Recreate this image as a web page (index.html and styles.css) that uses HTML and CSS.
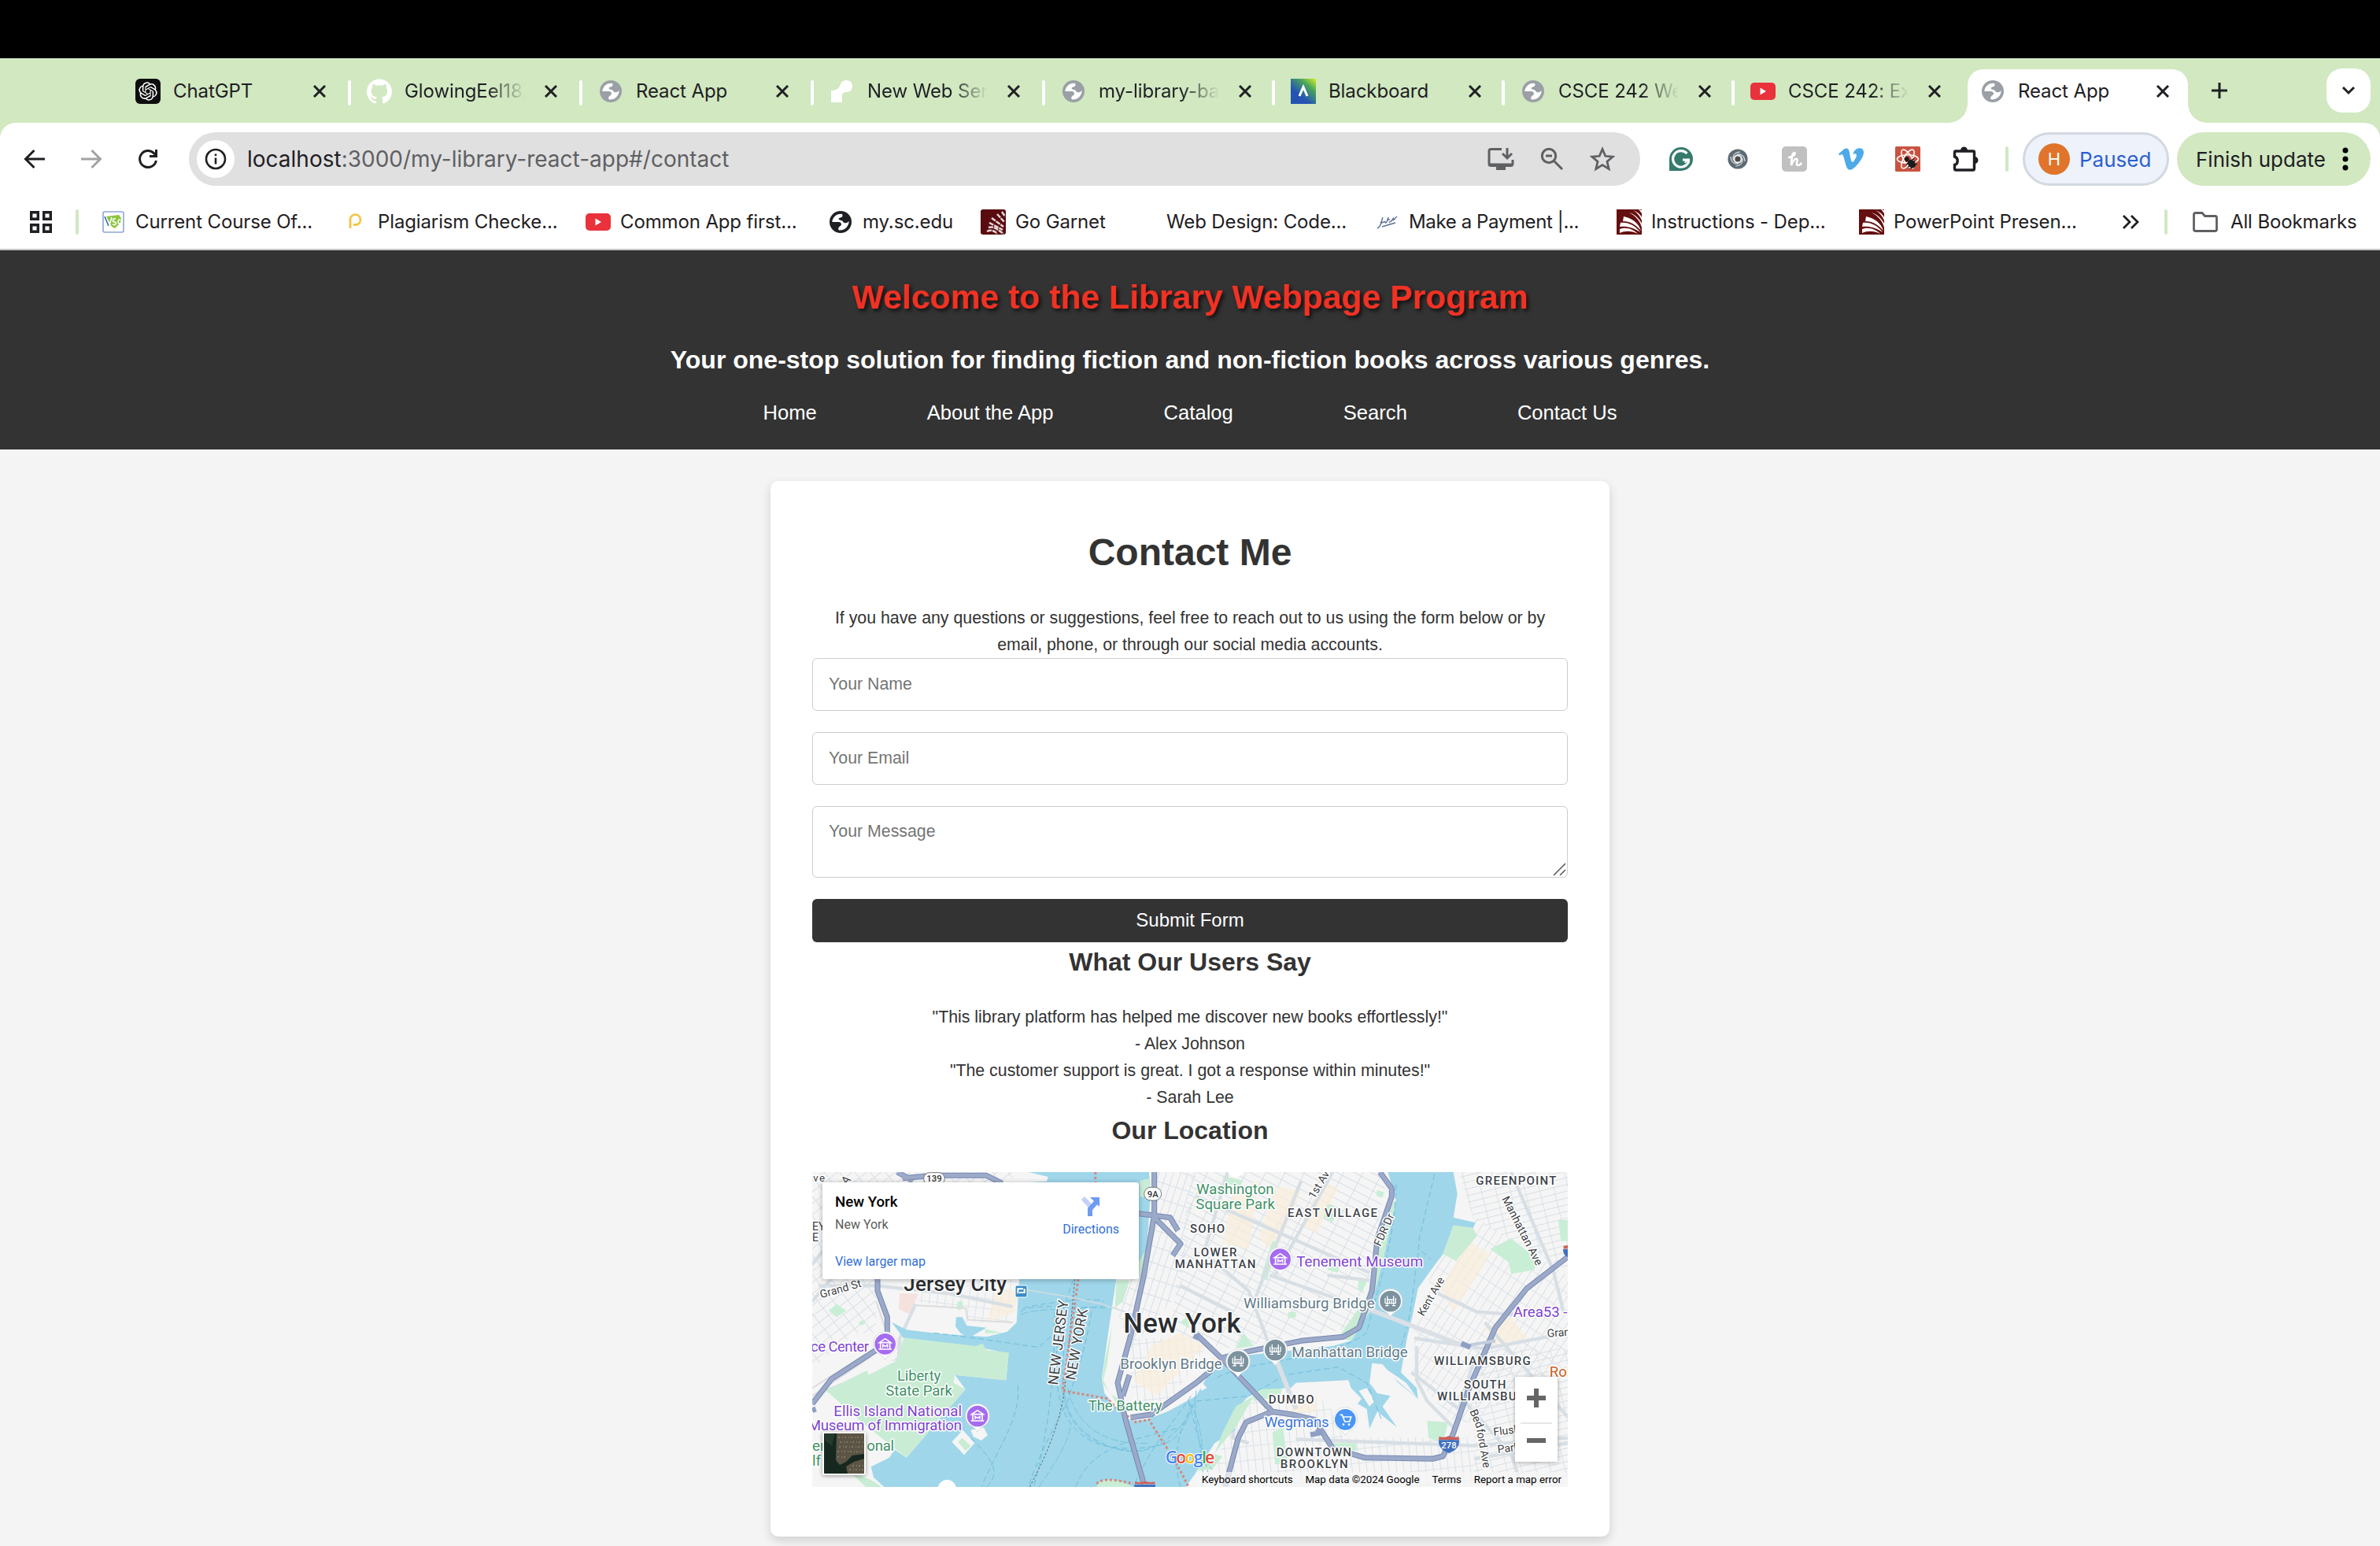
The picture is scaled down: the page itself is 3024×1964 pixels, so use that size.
FILE: index.html
```html
<!DOCTYPE html>
<html lang="en">
<head>
<meta charset="utf-8">
<title>React App</title>
<link rel="stylesheet" href="styles.css">
</head>
<body>
<svg class="defs" width="0" height="0" aria-hidden="true">
  <symbol id="globe" viewBox="0 0 28 28"><circle cx="14" cy="14" r="14" fill="currentColor"/><path class="globe-land" d="M16 4C9 3 4 8 3.3 14H11C14 14 16 16 14.5 18.5L13 19.5C11 21 10.5 23 12 24.5C19 25 24.5 20 24.7 13C22 16 18 16 17 13.5C16 11.5 13 12 12 11C11 9 13 8.5 15 8C16.500 7.500 17 5.500 16 4Z"/></symbol>
  <symbol id="close" viewBox="0 0 16 16"><path d="M1 1L15 15M15 1L1 15" stroke="#1f2023" stroke-width="3" fill="none"/></symbol>
  <symbol id="yt" viewBox="0 0 32 22"><rect width="32" height="22" rx="5" fill="#ea323c"/><path d="M12.500 6.500L20 11L12.500 15.500Z" fill="#fff"/></symbol>
  <symbol id="usc" viewBox="0 0 32 32"><rect width="32" height="32" fill="#650f10"/><g fill="#fff"><path d="M16 4C24 8 30 15 32 23V18C29 12 23 6 16 4ZM21 1C26 4 30 9 32 14V10C30 6 26 3 21 1Z"/><path d="M9 9C19 11 28 17 31 27C24 19 17 15 8 15Z"/><path d="M5 17C15 16 24 21 30 29C21 23 13 21 4 22Z"/><path d="M4 25C12 22 21 25 27 31C19 27 11 27 4 30ZM28 0L32 5V1Z"/></g></symbol>
</svg>

<div class="notch-bar"></div>

<nav class="tabs">
  <div class="tab"><span class="fav"><svg width="32" height="32" viewBox="0 0 32 32"><rect width="32" height="32" rx="6" fill="#0d0d0d"/><path transform="translate(4.300 4.300) scale(.975)" fill="#fff" d="M22.2819 9.8211a5.9847 5.9847 0 0 0-.5157-4.9108 6.0462 6.0462 0 0 0-6.5098-2.9A6.0651 6.0651 0 0 0 4.9807 4.1818a5.9847 5.9847 0 0 0-3.9977 2.9 6.0462 6.0462 0 0 0 .7427 7.0966 5.98 5.98 0 0 0 .511 4.9107 6.051 6.051 0 0 0 6.5146 2.9001A5.9847 5.9847 0 0 0 13.2599 24a6.0557 6.0557 0 0 0 5.7718-4.2058 5.9894 5.9894 0 0 0 3.9977-2.9001 6.0557 6.0557 0 0 0-.7475-7.0729zm-9.022 12.6081a4.4755 4.4755 0 0 1-2.8764-1.0408l.1419-.0804 4.7783-2.7582a.7948.7948 0 0 0 .3927-.6813v-6.7369l2.02 1.1686a.071.071 0 0 1 .038.052v5.5826a4.504 4.504 0 0 1-4.4945 4.4944zm-9.6607-4.1254a4.4708 4.4708 0 0 1-.5346-3.0137l.142.0852 4.783 2.7582a.7712.7712 0 0 0 .7806 0l5.8428-3.3685v2.3324a.0804.0804 0 0 1-.0332.0615L9.74 19.9502a4.4992 4.4992 0 0 1-6.1408-1.6464zM2.3408 7.8956a4.485 4.485 0 0 1 2.3655-1.9728V11.6a.7664.7664 0 0 0 .3879.6765l5.8144 3.3543-2.0201 1.1685a.0757.0757 0 0 1-.071 0l-4.8303-2.7865A4.504 4.504 0 0 1 2.3408 7.872zm16.5963 3.8558L13.1038 8.364 15.1192 7.2a.0757.0757 0 0 1 .071 0l4.8303 2.7913a4.4944 4.4944 0 0 1-.6765 8.1042v-5.6772a.79.79 0 0 0-.407-.667zm2.0107-3.0231l-.142-.0852-4.7735-2.7818a.7759.7759 0 0 0-.7854 0L9.409 9.2297V6.8974a.0662.0662 0 0 1 .0284-.0615l4.8303-2.7866a4.4992 4.4992 0 0 1 6.6802 4.66zM8.3065 12.863l-2.02-1.1638a.0804.0804 0 0 1-.038-.0567V6.0742a4.4992 4.4992 0 0 1 7.3757-3.4537l-.142.0805L8.704 5.459a.7948.7948 0 0 0-.3927.6813zm1.0976-2.3654l2.602-1.4998 2.6069 1.4998v2.9994l-2.5974 1.4997-2.6067-1.4997Z"/></svg></span><span class="name">ChatGPT</span><svg class="x"><use href="#close"/></svg></div>
  <div class="tab"><span class="fav"><svg width="32" height="32" viewBox="0 0 24 24"><path fill="#fff" d="M12 .297c-6.63 0-12 5.373-12 12 0 5.303 3.438 9.800 8.205 11.385.6.113.82-.258.82-.577 0-.285-.01-1.040-.015-2.040-3.338.724-4.042-1.610-4.042-1.610C4.422 18.070 3.633 17.700 3.633 17.700c-1.087-.744.084-.729.084-.729 1.205.084 1.838 1.236 1.838 1.236 1.070 1.835 2.809 1.305 3.495.998.108-.776.417-1.305.76-1.605-2.665-.3-5.466-1.332-5.466-5.930 0-1.310.465-2.380 1.235-3.220-.135-.303-.54-1.523.105-3.176 0 0 1.005-.322 3.300 1.230.96-.267 1.980-.399 3-.405 1.020.006 2.040.138 3 .405 2.280-1.552 3.285-1.230 3.285-1.230.645 1.653.24 2.873.12 3.176.765.84 1.230 1.910 1.230 3.220 0 4.610-2.805 5.625-5.475 5.920.42.36.81 1.096.81 2.220 0 1.606-.015 2.896-.015 3.286 0 .315.21.69.825.57C20.565 22.092 24 17.592 24 12.297c0-6.627-5.373-12-12-12"/></svg></span><span class="name fade">GlowingEel18/</span><svg class="x"><use href="#close"/></svg></div>
  <div class="tab"><span class="fav gray"><svg width="28" height="28"><use href="#globe"/></svg></span><span class="name">React App</span><svg class="x"><use href="#close"/></svg></div>
  <div class="tab"><span class="fav"><svg width="32" height="32" viewBox="0 0 32 32"><path fill="#fff" d="M2 30V15C8 15 12 13 13.500 8C14.500 4 18 2 22 2C27 2 29 6 29 9.500C29 14 26 17 22 17C19 17 16 18 16 21V30Z"/></svg></span><span class="name fade">New Web Serv</span><svg class="x"><use href="#close"/></svg></div>
  <div class="tab short"><span class="fav gray"><svg width="28" height="28"><use href="#globe"/></svg></span><span class="name fade">my-library-bac</span><svg class="x"><use href="#close"/></svg></div>
  <div class="tab short"><span class="fav"><svg width="32" height="32" viewBox="0 0 32 32"><defs><linearGradient id="bb" x1="1" y1="0" x2=".4" y2=".7"><stop offset="0" stop-color="#d8ee2a"/><stop offset=".45" stop-color="#47a55a"/><stop offset="1" stop-color="#2553b4"/></linearGradient></defs><rect width="32" height="32" fill="url(#bb)"/><path d="M11 22L16 10.500L21 22" fill="none" stroke="#fff" stroke-width="3"/></svg></span><span class="name">Blackboard</span><svg class="x"><use href="#close"/></svg></div>
  <div class="tab short"><span class="fav gray"><svg width="28" height="28"><use href="#globe"/></svg></span><span class="name fade">CSCE 242 We</span><svg class="x"><use href="#close"/></svg></div>
  <div class="tab last"><span class="fav"><svg width="32" height="22"><use href="#yt"/></svg></span><span class="name fade">CSCE 242: Ex</span><svg class="x"><use href="#close"/></svg></div>
  <div class="tab active"><span class="fav gray"><svg width="28" height="28"><use href="#globe"/></svg></span><span class="name">React App</span><svg class="x"><use href="#close"/></svg></div>
  <svg class="plus" width="20" height="20"><path d="M10 0V20M0 10H20" stroke="#1f2023" stroke-width="3"/></svg>
  <button class="tab-menu"><svg width="18" height="12"><path d="M2 2L9 9L16 2" fill="none" stroke="#1f2023" stroke-width="3"/></svg></button>
</nav>

<div class="toolbar">
  <svg class="nav-ico back" width="28" height="26" viewBox="0 0 28 26"><path d="M27 13H3M13.500 2L2.500 13L13.500 24" fill="none" stroke="#1f2023" stroke-width="3"/></svg>
  <svg class="nav-ico fwd" width="28" height="26" viewBox="0 0 28 26"><path d="M1 13H25M14.500 2L25.500 13L14.500 24" fill="none" stroke="#a2a2a2" stroke-width="3"/></svg>
  <svg class="nav-ico reload" width="28" height="28" viewBox="0 0 28 28"><path d="M24.400 16A10.500 10.500 0 1 1 21.500 6.600L25 10" fill="none" stroke="#1f2023" stroke-width="3"/><path d="M26 2V12H16V9H23V2Z" fill="#1f2023"/></svg>
  <div class="omnibox">
    <span class="info"><svg width="28" height="28"><circle cx="14" cy="14" r="12" fill="none" stroke="#1f2023" stroke-width="2.600"/><path d="M14 12.500V20.500M14 7.500V10" stroke="#1f2023" stroke-width="2.600"/></svg></span>
    <span class="url">localhost<span>:3000/my-library-react-app#/contact</span></span>
    <svg class="ob-ico" width="34" height="30" viewBox="0 0 34 30"><path d="M18 2.500H4.500C3 2.500 2 3.500 2 5V21C2 22.500 3 23.500 4.500 23.500H29.500C31 23.500 32 22.500 32 21V16" fill="none" stroke="#5e6063" stroke-width="3"/><path d="M25 1V14M19 8L25 14L31 8" stroke="#5e6063" stroke-width="3" fill="none"/><path d="M2 20.500H32V24H2ZM11 23H23V29H11Z" fill="#5e6063"/></svg>
    <svg class="ob-ico" width="30" height="30" viewBox="0 0 30 30"><circle cx="11" cy="11" r="8.700" fill="none" stroke="#5e6063" stroke-width="3"/><path d="M7 11H15M17.500 17.500L28 28" stroke="#5e6063" stroke-width="3"/></svg>
    <svg class="ob-ico" width="32" height="32" viewBox="0 0 32 32"><path d="M16 3.500L19.800 12.300L29.200 13.100L22 19.300L24.200 28.500L16 23.600L7.800 28.500L10 19.300L2.800 13.100L12.200 12.300Z" fill="none" stroke="#5e6063" stroke-width="2.800"/></svg>
  </div>
  <div class="exts">
    <svg width="32" height="32" viewBox="0 0 32 32"><path d="M1 31V16A15 15 0 1 1 16 31Z" fill="#357a6b"/><path d="M23.500 9A10.300 10.300 0 1 0 25.500 19.500V17H18" fill="none" stroke="#fff" stroke-width="3.200"/><path d="M20.500 20.500L25.500 16.500" stroke="#fff" stroke-width="2"/></svg>
    <svg width="32" height="32" viewBox="0 0 32 32"><circle cx="16" cy="16" r="9.200" fill="none" stroke="#5d6a72" stroke-width="6.800"/><path d="M10 17C9 11 13 7 19 7M15 10C21 9 25 13 25 19M22 15C23 21 19 25 13 25M17 22C11 23 7 19 7 13" fill="none" stroke="#dfe4e8" stroke-width="1.100"/><circle cx="16" cy="16" r="5.200" fill="#e8ebed"/><circle cx="16" cy="16" r="3.600" fill="#4b4b4b"/></svg>
    <svg width="32" height="32" viewBox="0 0 32 32"><rect width="32" height="32" rx="5" fill="#c0c0c0"/><path d="M9 14C15 13 18 9 16 8C13 8 12 18 12 24C14 18 17 15 19 16C21 17 17 24 20 24C22 24 24 23 24.500 21.500" fill="none" stroke="#fff" stroke-width="2.600" stroke-linecap="round"/></svg>
    <svg width="32" height="32" viewBox="0 0 24 24"><path fill="#4caae8" d="M23.977 6.416c-.105 2.338-1.739 5.543-4.894 9.609-3.268 4.247-6.026 6.370-8.290 6.370-1.409 0-2.578-1.294-3.553-3.881L5.322 11.400C4.603 8.816 3.834 7.522 3.010 7.522c-.179 0-.806.378-1.881 1.132L0 7.197c1.185-1.044 2.351-2.084 3.501-3.128C5.080 2.701 6.266 1.984 7.055 1.910c1.867-.18 3.016 1.100 3.447 3.838.465 2.953.789 4.789.971 5.507.539 2.450 1.131 3.674 1.776 3.674.502 0 1.256-.796 2.265-2.385 1.004-1.589 1.540-2.797 1.612-3.628.144-1.371-.395-2.061-1.614-2.061-.574 0-1.167.121-1.777.391 1.186-3.868 3.434-5.757 6.762-5.637 2.473.06 3.628 1.664 3.493 4.797l-.013.01z"/></svg>
    <svg width="32" height="32" viewBox="0 0 32 32"><rect width="32" height="32" rx="1.500" fill="#c95340"/><g fill="none" stroke="#fff" stroke-width="1.500"><ellipse cx="16" cy="16" rx="13.500" ry="5.200"/><ellipse cx="16" cy="16" rx="13.500" ry="5.200" transform="rotate(60 16 16)"/><ellipse cx="16" cy="16" rx="13.500" ry="5.200" transform="rotate(120 16 16)"/></g><g transform="rotate(-38 20 21)" stroke="#1c1c1c" stroke-width="1.400"><ellipse cx="20" cy="22.500" rx="3.800" ry="5" fill="#1c1c1c"/><circle cx="19" cy="14" r="2.300" fill="#1c1c1c"/><path d="M13.500 19L26.500 19M14 22.500H26M14.500 26.500H25.500"/></g></svg>
    <svg width="34" height="34" viewBox="0 0 34 34"><path d="M4 7H27C28 7 28.500 7.500 28.500 8.500V29C28.500 30 28 31 27 31H5C4 31 3.500 30 3.500 29V24.500C8.500 23 8.500 15.500 3.500 14V8.500C3.500 7.500 3.500 7 5 7Z" fill="none" stroke="#1f2023" stroke-width="3.400"/><path d="M11 6A4.500 4.500 0 0 1 20 6ZM29 14A4.500 4.500 0 0 1 29 23Z" fill="#1f2023"/></svg>
  </div>
  <i class="bar"></i>
  <div class="profile"><b>H</b>Paused</div>
  <div class="update">Finish update<svg width="8" height="30"><circle cx="4" cy="4" r="3.500"/><circle cx="4" cy="15" r="3.500"/><circle cx="4" cy="26" r="3.500"/></svg></div>
</div>

<div class="bookmarks">
  <svg class="apps" width="28" height="28" viewBox="0 0 28 28"><path d="M1.700 1.700H10.300V10.300H1.700ZM17.700 1.700H26.300V10.300H17.700ZM1.700 17.700H10.300V26.300H1.700ZM17.700 17.700H26.300V26.300H17.700Z" fill="none" stroke="#1f2023" stroke-width="3.400"/></svg>
  <i class="bar"></i>
  <div class="bm"><span><svg width="28" height="28"><rect x="1" y="1" width="26" height="26" rx="2" fill="#fff" stroke="#8ea5d6" stroke-width="1.600"/><path d="M5 7L21 5L24 9L23 15L16 22L12 20Z" fill="#8cc63f"/><path d="M4 7L9 18L12 8M17 10C12 9 13 14 16 14C19 15 17 19 13 17M23 11C19 11 19 17 23 16" fill="none" stroke="#fff" stroke-width="1.600"/><path d="M3 7L8 19" stroke="#3c68b0" stroke-width="1.600"/></svg></span>Current Course Of...</div>
  <div class="bm"><span><svg width="26" height="26"><path d="M6 21V9.500A6.500 6.500 0 1 1 14 16.500H10" fill="none" stroke="#f6c445" stroke-width="2.800"/></svg></span>Plagiarism Checke...</div>
  <div class="bm"><span><svg width="32" height="22"><use href="#yt"/></svg></span>Common App first...</div>
  <div class="bm"><span class="ink"><svg width="28" height="28"><use href="#globe"/></svg></span>my.sc.edu</div>
  <div class="bm"><span><svg width="32" height="32" viewBox="0 0 32 32"><rect width="32" height="32" rx="3" fill="#590c10"/><g stroke="#e9dcdc" stroke-width="2.400" fill="none"><path d="M21 6L30 16M27 3L31 9M14 11L29 22M11 17L28 26M10 23C17 21 22 26 29 31M8 28C14 25 19 28 21 31" stroke-dasharray="6 1"/></g></svg></span>Go Garnet</div>
  <div class="bm"><span></span>Web Design: Code...</div>
  <div class="bm tight"><span><svg width="28" height="28"><path d="M2 22C7 21 7 12 9 8M6 14C8 17 11 12 12 14C12 17 15 14 16 8M14 11H18M17 15C19 12 19 15 22 10C22 14 24 9 27 7M8 20L25 15" fill="none" stroke="#5c6f95" stroke-width="1.500"/></svg></span>Make a Payment |...</div>
  <div class="bm"><span><svg width="32" height="32"><use href="#usc"/></svg></span>Instructions - Dep...</div>
  <div class="bm"><span><svg width="32" height="32"><use href="#usc"/></svg></span>PowerPoint Presen...</div>
  <svg class="more" width="22" height="18"><path d="M2 1L10 9L2 17M12 1L20 9L12 17" fill="none" stroke="#1f2023" stroke-width="2.800"/></svg>
  <i class="bar"></i>
  <div class="bm all"><span><svg width="32" height="26" viewBox="0 0 32 26"><path d="M3.500 1.500H12L15.500 5.500H28.500C29.800 5.500 30.500 6.300 30.500 7.500V22.500C30.500 23.700 29.800 24.500 28.500 24.500H3.500C2.300 24.500 1.500 23.700 1.500 22.500V3.500C1.500 2.300 2.300 1.500 3.500 1.500Z" fill="none" stroke="#5e6063" stroke-width="2.800"/></svg></span>All Bookmarks</div>
</div>

<header class="site-header">
  <h1>Welcome to the Library Webpage Program</h1>
  <h2>Your one-stop solution for finding fiction and non-fiction books across various genres.</h2>
  <nav><a>Home</a><a>About the App</a><a>Catalog</a><a>Search</a><a>Contact Us</a></nav>
</header>

<main class="card">
  <h1>Contact Me</h1>
  <p>If you have any questions or suggestions, feel free to reach out to us using the form below or by email, phone, or through our social media accounts.</p>
  <form>
    <input type="text" placeholder="Your Name">
    <input type="email" placeholder="Your Email">
    <div class="area"><textarea placeholder="Your Message"></textarea><svg width="18" height="18"><path d="M2 17L17 2M10 17L17 10" stroke="#555" stroke-width="1.500"/></svg></div>
    <button type="button">Submit Form</button>
  </form>
  <h3>What Our Users Say</h3>
  <p>"This library platform has helped me discover new books effortlessly!"</p>
  <p>- Alex Johnson</p>
  <p>"The customer support is great. I got a response within minutes!"</p>
  <p>- Sarah Lee</p>
  <h3>Our Location</h3>
  <div class="map">
  <svg class="map-canvas" width="960" height="400" viewBox="36 27 2880 1200">
    <defs>
      <pattern id="gJc" width="46" height="34" patternUnits="userSpaceOnUse" patternTransform="rotate(-38)"><path d="M0 0H46M0 0V34" stroke="#d8dfe5" stroke-width="6" fill="none"/></pattern>
      <pattern id="gJd" width="30" height="38" patternUnits="userSpaceOnUse" patternTransform="rotate(7)"><path d="M0 0H30M0 0V38" stroke="#d8dfe5" stroke-width="5" fill="none"/></pattern>
      <pattern id="gMn" width="66" height="30" patternUnits="userSpaceOnUse" patternTransform="rotate(27)"><path d="M0 0H66M0 0V30" stroke="#d6dee4" stroke-width="5.500" fill="none"/></pattern>
      <pattern id="gMs" width="26" height="60" patternUnits="userSpaceOnUse" patternTransform="rotate(18)"><path d="M0 0H26M0 0V60" stroke="#d6dee4" stroke-width="5.500" fill="none"/></pattern>
      <pattern id="gWb" width="28" height="62" patternUnits="userSpaceOnUse" patternTransform="rotate(33)"><path d="M0 0H28M0 0V62" stroke="#d6dee4" stroke-width="5" fill="none"/></pattern>
      <pattern id="gGp" width="54" height="25" patternUnits="userSpaceOnUse" patternTransform="rotate(-14)"><path d="M0 0H54M0 0V25" stroke="#d6dee4" stroke-width="5" fill="none"/></pattern>
      <pattern id="gBk" width="28" height="54" patternUnits="userSpaceOnUse" patternTransform="rotate(-6)"><path d="M0 0H28M0 0V54" stroke="#d6dee4" stroke-width="5" fill="none"/></pattern>
      <symbol id="pin" viewBox="-48 -48 96 112"><path d="M0 60C-8 44-22 40-34 30A46 46 0 1 1 34 30C22 40 8 44 0 60Z" fill="#fff" stroke="#c9cdd2" stroke-width="2"/><circle r="40" fill="currentColor"/></symbol>
      <g id="museum"><path d="M-22 -7L0 -22L22 -7ZM-18 -5V18M18 -5V18M-25 18H25" fill="none" stroke="#fff" stroke-width="5"/><path d="M-9 13V1L0 8L9 1V13" fill="none" stroke="#fff" stroke-width="4.500"/></g>
      <g id="bridge"><path d="M-12 -20V14M12 -20V14M-20 8H20M-20 -12V8M20 -12V8M-12 -6H12M-4 -2V8M4 -2V8M-20 17H-7M7 17H20" fill="none" stroke="#fff" stroke-width="4"/></g>
      <path id="mw" d="M360 27L420 60M380 50L500 40L700 40L760 70M285 430V480L322 580V650M280 705L110 815L36 910M1340 27V190L1300 420L1250 650L1200 830L1230 970L1300 1215M1281 185L1400 200L1430 250M1340 200L1440 300L1410 345M1245 800L1220 880M1250 962L1330 950L1500 830L1560 780M1500 645L1600 740L1790 940L1860 950L1950 970L2020 1080L2140 1115L2400 1120L2440 1110L2470 1050L2540 850L2640 620L2760 470L2916 350M1600 735L1700 710L1900 670L2060 655L2120 620L2170 480L2190 280L2245 120V90L2200 27M1790 940L1690 980L1660 1040L1610 1227"/>
    </defs>
    <rect x="36" y="27" width="2880" height="1200" fill="#f5f5f5"/>
    <!-- street grids -->
    <path fill="url(#gJc)" d="M36 27H800V110H280V640H200L36 780Z"/>
    <path fill="url(#gJd)" d="M440 435H820L790 600H620V560L440 520Z"/>
    <path fill="url(#gMs)" d="M1340 27H1500L1440 480L1250 700L1200 560Z"/>
    <path fill="url(#gMn)" d="M1480 27H2230L2160 420L2100 620L1600 700L1400 640Z"/>
    <path fill="url(#gBk)" d="M1250 660H1560L1400 900H1250Z"/>
    <path fill="url(#gWb)" d="M2330 640L2400 400L2570 200L2916 420V760L2500 1000L2330 800Z"/>
    <path fill="url(#gGp)" d="M2500 27H2916V400L2560 210ZM2560 700H2916V1227H2560Z"/>
    <path fill="url(#gBk)" d="M1640 900H2000L2060 1040H2560V1227H1560Z"/>
    <!-- commercial blocks -->
    <g fill="#f8eedb" opacity=".75"><path d="M740 470L820 480L810 560L700 600ZM1640 100L1740 60L1700 320L1600 300ZM1800 80L1900 100L1800 340L1740 280ZM1980 60L2040 90L1960 260L1900 230ZM1330 690L1440 640L1530 690L1350 880L1260 820ZM2540 290L2620 340L2480 560L2430 470ZM2600 620L2700 580L2760 660L2640 690ZM1860 880H1960V940L1860 945ZM1560 740L1600 720L1560 800Z"/></g>
    <path d="M370 490L440 490L410 570L365 550Z" fill="#f5e2de"/>
    <g fill="#c9eed6"><path d="M130 530L166 556L128 580L98 554ZM590 520H610V548L588 552ZM695 625L760 640L695 642ZM212 600L230 590L240 602L222 612ZM1600 40L1680 60L1660 80L1610 70ZM1790 290H1810L1770 440L1745 430ZM2000 150L2040 160L2020 220L1985 200ZM2190 95L2218 105L2205 125L2185 115ZM2010 360L2050 370L2040 410L2000 400ZM2120 440L2150 445L2135 480L2115 475ZM1850 560H1880V580L1850 585ZM2620 320L2700 280L2790 350L2790 400L2700 415L2690 370ZM2880 210H2916V290H2890ZM2380 975L2460 980L2440 1060L2385 1040ZM1710 860L1830 840L1820 880L1720 900ZM1440 600L1470 570V620ZM1790 1020L1830 1000L1850 1140H1800ZM2010 1060H2110V1090H2010ZM1680 640L1720 690L1650 700Z"/></g>
    <!-- arterial streets -->
    <g fill="none" stroke="#d7dfe5" stroke-width="13"><path d="M36 520L340 160M36 380L160 220M60 460L280 460L560 490L800 540M430 530L370 660L365 740L240 800L90 860"/><path d="M1500 120L1820 260L2160 410M1780 420L2180 560M1560 360L1700 480L1780 690M1900 60L1720 520M2020 27L1800 420M1440 460L1640 560M1620 27L1530 330M2000 420L2160 440"/><path d="M2330 660L2600 700L2916 640M2400 480L2570 560L2720 570M2320 790L2500 930L2560 740M2340 690V820L2380 900L2480 1000M2700 27L2860 400L2900 560M2600 600L2916 960M1880 1045L2560 1070L2916 1040M1640 900V1040L1700 1060M2520 900L2700 1100L2740 1227M2560 1120L2916 1060"/></g>
    <path d="M430 535L620 545L630 590L800 600M36 850L240 720M36 880L260 730M280 520L320 640" fill="none" stroke="#dcdcde" stroke-width="6"/>
    <!-- water -->
    <path fill="#9fd6ea" d="M860 27L935 45L930 62L860 66L825 435L815 600L770 645L690 658L625 655L600 640L582 615L585 580L608 580L625 612L700 620L640 655L520 645L395 630L340 600L385 660L660 690L785 715L775 820L580 800L620 855L395 1115L350 1085L330 1115L260 1150L270 1190L310 1227H1460L1500 1170L1570 1060L1650 1010L1630 960L1690 890L1740 855L1860 850L1880 830L2080 820L2090 850L2130 890L2115 910L2150 930L2160 1005L2190 940L2265 1000L2210 920L2240 880L2190 870L2160 830L2170 755L2210 760L2270 830L2345 890L2340 850L2280 790L2305 650L2325 570L2345 470L2395 400L2440 340L2480 230L2555 240L2565 220L2480 200L2495 110L2480 27H2230L2262 130L2210 370L2160 560L2090 670L2020 690L1690 725L1600 760L1545 800L1500 880L1390 940L1310 970L1250 975L1200 930L1150 870L1140 810L1170 600L1195 435L1245 435L1310 330L1325 120L1320 27Z"/>
    <path fill="#9fd6ea" d="M340 600L395 628L520 643L700 655L800 630L790 720L660 692L385 660Z"/>
    <g fill="#f5f5f5"><path d="M2190 755L2300 830L2340 885L2240 800ZM2120 860L2150 850L2180 900L2160 920ZM2240 905L2270 960L2255 965ZM568 1055L610 1010L655 1060L615 1105ZM640 1010L690 1000L705 1030L680 1050L650 1035ZM1500 800L1540 850L1520 860Z"/></g>
    <!-- waterfront parks -->
    <g fill="#c9ecd4"><path d="M385 658L660 690L685 680L700 705L785 715L775 820L580 800L575 830L620 855L395 1115L350 1080L200 960L90 860L230 790L360 740ZM1195 440H1245L1220 520L1190 545ZM1285 60L1325 50V125L1285 120ZM1300 335L1320 330L1280 430H1250ZM1180 610L1160 760L1145 820L1170 870L1200 890L1220 960L1180 880L1140 830L1150 750ZM1120 1227C1130 1190 1190 1190 1260 1227ZM592 1055L608 1040L640 1070L620 1090ZM2245 150L2262 130L2210 370L2160 560L2090 670L2040 660L2150 500L2200 300ZM2440 340L2480 230L2555 240L2570 270L2490 365ZM1650 920L1720 880L1650 1000L1600 1060L1570 1100L1600 1020ZM1560 1100L1600 1110L1560 1160L1500 1165ZM180 1170L260 1200L300 1227H240Z"/></g>
    <path d="M240 760L280 750L360 745L250 800Z" fill="#f5f5f5"/>
    <!-- ferry routes -->
    <g fill="none" stroke="#6fbedb" stroke-width="3" stroke-dasharray="22 12"><path d="M500 640L660 660L900 695L960 640L1030 440M830 560C850 530 1000 540 1160 545M840 545C900 530 1100 500 1150 520M975 640C940 900 1000 1080 1240 1080S1440 980 1500 900M1000 640C980 860 980 980 1140 1060S1400 1050 1470 960M960 560C960 800 940 1000 880 1227M1100 560C1080 700 1040 800 1010 900C960 1000 900 1100 860 1227M820 840C830 960 760 1050 680 1227M640 1040C720 1120 760 1170 700 1227M1040 1227C1100 1060 1300 1040 1440 1000M1480 880C1400 1000 1340 1050 1260 1227M1470 900L1560 1227M1440 1227C1400 1100 1440 1000 1500 880M1500 900L1700 880L1840 800L2040 770L2150 830L2210 980M1580 810C1700 740 2000 750 2150 640C2180 500 2260 300 2262 60M2280 690C2330 560 2330 400 2345 350L2350 280L2410 27M2360 330L2395 360"/></g>
    <g fill="none" stroke="#79c4df" stroke-width="3" stroke-dasharray="30 8"><path d="M1500 860C1480 1000 1540 1100 1520 1227M1470 900C1540 1000 1500 1100 1560 1160M830 570C900 540 1000 560 1160 535M990 860C1010 1000 1100 1090 1300 1090M1010 850C1040 1000 1160 1070 1320 1060M900 1227C960 1140 1010 1060 1020 1000"/></g>
    <path d="M1037 435L1000 840C980 1000 920 1120 865 1227" fill="none" stroke="#5b6b76" stroke-width="3" stroke-dasharray="8 7"/>
    <path d="M1115 27V66M1050 435L990 860L1160 890L1200 930L1270 980L1320 970C1360 1040 1420 1120 1470 1227M1120 1215C1140 1190 1200 1200 1260 1215" fill="none" stroke="#d4887b" stroke-width="9" stroke-dasharray="9 9"/>
    <!-- bridges -->
    <path d="M1780 680L1880 930M2160 550L2520 690" fill="none" stroke="#dae0e5" stroke-width="18"/>
    <path d="M850 475L1000 500L1140 530L1260 570" fill="none" stroke="#cfdbe2" stroke-width="5"/>
    <!-- motorways -->
    <g fill="none" stroke-linejoin="round">
      <use href="#mw" stroke="#7688b3" stroke-width="21"/>
      <use href="#mw" stroke="#9caac9" stroke-width="15"/>
      <path d="M2520 690L2640 670" stroke="#c3cddd" stroke-width="12"/>
      <path d="M1490 650L1510 660M2510 680L2545 695M1935 1028L1975 1020L1960 1005M36 935L50 930" stroke="#8f9fc4" stroke-width="20"/>
    </g>
    <!-- street labels -->
    <g class="lb street">
      <text x="40" y="62" textLength="44" font-size="40">ve</text>
      <text transform="translate(166 78) rotate(-48)" font-size="44">A</text>
      <text x="36" y="248" font-size="42">EY</text><text x="36" y="292" font-size="42">E</text>
      <text transform="translate(70 508) rotate(-16)" font-size="42" textLength="162">Grand St</text>
      <text transform="translate(972 840) rotate(-83)" font-size="54" textLength="325">NEW JERSEY</text>
      <text transform="translate(1038 822) rotate(-80)" font-size="54" textLength="275">NEW YORK</text>
      <text transform="translate(1520 132) rotate(-59)" x="222" y="368" font-size="42" textLength="115">1st Av</text>
      <text transform="translate(2202 312) rotate(-66)" font-size="42" textLength="130">FDR Dr</text>
      <text transform="translate(2366 578) rotate(-60)" font-size="42" textLength="162">Kent Ave</text>
      <text transform="translate(2664 128) rotate(63)" font-size="43" textLength="290">Manhattan Ave</text>
      <text transform="translate(2542 938) rotate(68)" font-size="42">Bed</text>
      <text transform="translate(2568 1008) rotate(80)" font-size="42" textLength="150">ford Ave</text>
      <text transform="translate(2838 656) rotate(-4)" font-size="42">Gran</text>
      <text transform="translate(2634 1032) rotate(-7)" font-size="42">Flush</text>
      <text transform="translate(2650 1098) rotate(-7)" font-size="42">Park</text>
    </g>
    <g class="lb hood" font-size="45">
      <text x="2566" y="75" textLength="306">GREENPOINT</text><text x="1848" y="199" textLength="342">EAST VILLAGE</text><text x="1476" y="257" textLength="132">SOHO</text><text x="1490" y="348" textLength="164">LOWER</text><text x="1418" y="392" textLength="308">MANHATTAN</text><text x="2406" y="762" textLength="368">WILLIAMSBURG</text><text x="2520" y="853" textLength="160">SOUTH</text><text x="2418" y="898" textLength="368">WILLIAMSBURG</text><text x="1775" y="909" textLength="174">DUMBO</text><text x="1805" y="1110" textLength="286">DOWNTOWN</text><text x="1820" y="1154" textLength="258">BROOKLYN</text>
    </g>
    <g class="lb city"><text x="385" y="480" font-size="78" textLength="392">Jersey City</text><text x="1222" y="638" font-size="104" textLength="448">New York</text></g>
    <g class="lb park" font-size="56"><text x="1500" y="111" textLength="296">Washington</text><text x="1498" y="167" textLength="302">Square Park</text><text x="360" y="822" textLength="166">Liberty</text><text x="316" y="879" textLength="254">State Park</text><text x="1088" y="935" textLength="282">The Battery</text><text x="36" y="1090">er</text><text x="244" y="1090" textLength="104">onal</text><text x="36" y="1145">lf</text></g>
    <g class="lb poi" font-size="56"><text x="30" y="710" textLength="222">ce Center</text><text x="118" y="956" textLength="488">Ellis Island National</text><text x="20" y="1012" textLength="586">Museum of Immigration</text><text x="1882" y="387" textLength="482">Tenement Museum</text><text x="2708" y="580" textLength="206">Area53 -</text></g>
    <g class="lb brg" font-size="56"><text x="1680" y="546" textLength="500">Williamsburg Bridge</text><text x="1210" y="777" textLength="388">Brooklyn Bridge</text><text x="1864" y="732" textLength="442">Manhattan Bridge</text></g>
    <text class="lb shop" x="1760" y="998" font-size="56" textLength="246">Wegmans</text>
    <text class="lb food" x="2846" y="808" font-size="56">Rob</text>
    <!-- pins -->
    <g color="#a56cf0"><use href="#pin" x="266" y="634" width="96" height="112"/><use href="#pin" x="618" y="909" width="96" height="112"/><use href="#pin" x="1772" y="311" width="96" height="112"/></g>
    <use href="#museum" x="314" y="684"/><use href="#museum" x="666" y="957"/><use href="#museum" x="1820" y="360"/>
    <g color="#7c929e"><use href="#pin" x="2192" y="471" width="96" height="112"/><use href="#pin" x="1753" y="657" width="96" height="112"/><use href="#pin" x="1611" y="701" width="96" height="112"/></g>
    <use href="#bridge" x="2240" y="519"/><use href="#bridge" x="1801" y="704"/><use href="#bridge" x="1659" y="748"/>
    <g color="#4a96f5"><use href="#pin" x="2020" y="922" width="96" height="112"/></g>
    <path d="M2048 952H2056L2066 978H2084L2090 960H2060" fill="none" stroke="#fff" stroke-width="5"/><circle cx="2061" cy="989" r="4" fill="#fff"/><circle cx="2082" cy="989" r="4" fill="#fff"/>
    <path d="M1620 27C1628 40 1640 44 1650 48C1660 44 1672 40 1680 27ZM515 1227A36 36 0 0 1 585 1227Z" fill="#fff"/>
    <!-- transit and route shields -->
    <rect x="810" y="459" width="45" height="45" rx="6" fill="#3a8cc6" stroke="#fff" stroke-width="3"/><path d="M820 490V472H840M845 472V486H825" fill="none" stroke="#fff" stroke-width="6"/>
    <rect x="461" y="29" width="80" height="46" rx="23" fill="#fff" stroke="#777" stroke-width="3"/><text class="rt" x="501" y="63" font-size="34">139</text>
    <rect x="1301" y="85" width="66" height="50" rx="25" fill="#fff" stroke="#777" stroke-width="3"/><text class="rt" x="1334" y="122" font-size="34">9A</text>
    <path d="M2424 1048H2502C2504 1076 2486 1090 2463 1098C2440 1090 2422 1076 2424 1048Z" fill="#4270bf"/><path d="M2426 1034C2440 1040 2452 1038 2463 1032C2474 1038 2486 1040 2500 1034L2502 1047H2424Z" fill="#cf5f58"/><text class="rt shield" x="2463" y="1081" font-size="34">278</text>
    <path d="M2898 320H2916V350C2904 348 2898 335 2898 320Z" fill="#4270bf"/><path d="M2900 308L2916 306V319H2900Z" fill="#cf5f58"/>
    <path d="M1266 1207C1290 1212 1296 1205 1304 1205C1312 1205 1320 1212 1342 1207V1216H1266Z" fill="#cf5f58"/><rect x="1264" y="1218" width="80" height="9" fill="#4270bf"/>
    <text class="goog" x="1382" y="1138" font-size="64" textLength="188"><tspan fill="#4285f4">G</tspan><tspan fill="#ea4335">o</tspan><tspan fill="#fbbc05">o</tspan><tspan fill="#4285f4">g</tspan><tspan fill="#34a853">l</tspan><tspan fill="#ea4335">e</tspan></text>
  </svg>
    <div class="place">
      <div><strong>New York</strong><span>New York</span><a>View larger map</a></div>
      <div class="dir"><svg width="26" height="26" viewBox="0 0 26 26"><path d="M3 2L13 13" stroke="#c0d2fb" stroke-width="6"/><path d="M12 25V16L20 7" fill="none" stroke="#6f9bf3" stroke-width="6"/><path d="M12 1H24V13Z" fill="#6f9bf3"/></svg><a>Directions</a></div>
    </div>
    <div class="sat"><svg width="51" height="51"><rect width="51" height="51" fill="#16281f"/><path d="M16 0H51V26L36 28L28 36L20 40L15 34ZM51 32L38 36L28 42L30 51H51Z" fill="#5c5545"/><path d="M18 5H50M20 11H50M19 17H50M17 23H48M17 30H30M36 41H50M32 46H50" stroke="#8a8170" stroke-width="1.500" stroke-dasharray="2 3 1 2"/><path d="M0 0H14L10 16L2 10Z" fill="#233a2c"/></svg></div>
    <div class="zoomctl"><b></b><i></i><b class="minus"></b></div>
    <div class="attrib"><span>Keyboard shortcuts</span><span>Map data ©2024 Google</span><span>Terms</span><span>Report a map error</span></div>
  </div>
</main>
</body>
</html>
```
FILE: styles.css
```css
* { box-sizing: border-box; }
body { margin: 0; width: 3024px; height: 1964px; overflow: hidden; background: #f4f4f4; color: #333; font-family: "Liberation Sans", Arial, sans-serif; }
.defs { display: block; position: absolute; }
h1, h2, h3, p { margin: 0; }
.notch-bar { height: 74px; background: #000; }
.tabs, .toolbar, .bookmarks { font-family: Inter, sans-serif; color: #1f2023; display: flex; align-items: center; white-space: nowrap; }

/* tab strip */
.tabs { height: 82px; background: #d1e8c1; padding-left: 150px; }
.tab { position: relative; width: 294px; height: 64px; margin-bottom: -2px; flex: none; display: flex; align-items: center; padding: 0 30px 0 22px; font-size: 24px; letter-spacing: -.1px; }
.tab::after { content: ""; position: absolute; right: -2px; top: 18px; width: 4px; height: 32px; border-radius: 2px; background: #fff; }
.tab.last::after, .tab.active::after { display: none; }
.tab.short { width: 292px; padding-right: 28px; }
.tab.last { width: 298px; padding-right: 34px; }
.fav { width: 32px; display: flex; justify-content: center; margin-right: 16px; flex: none; }
.fav svg { display: block; }
.gray { color: #9aa0a6; }
.ink { color: #1f2023; }
.globe-land { fill: #fff; }
.name { width: 156px; overflow: hidden; margin-right: auto; flex: none; padding-bottom: 2px; }
.fade { -webkit-mask-image: linear-gradient(90deg, #000 68%, transparent 98%); mask-image: linear-gradient(90deg, #000 68%, transparent 98%); }
.x { width: 16px; height: 16px; flex: none; }
.tab.active { width: 280px; height: 68px; margin: 14px 0 0; background: #fff; border-radius: 20px 20px 0 0; padding: 0 24px 12px 16px; }
.tab.active::before { content: ""; position: absolute; left: -24px; right: -24px; bottom: 0; height: 24px; background: radial-gradient(circle at 0 0, transparent 23.5px, #fff 24px) left/24px 24px no-repeat, radial-gradient(circle at 100% 0, transparent 23.5px, #fff 24px) right/24px 24px no-repeat; }
.plus { margin-left: 30px; }
.tab-menu { margin-left: auto; margin-right: 12px; width: 56px; height: 56px; border: 0; border-radius: 20px; background: #fff; display: grid; place-items: center; padding: 0; }

/* toolbar */
.toolbar { height: 92px; background: linear-gradient(#d1e8c1, #d1e8c1) 0 0/100% 24px no-repeat; position: relative; isolation: isolate; }
.toolbar::before { content: ""; position: absolute; inset: 0; background: #fff; border-radius: 20px 20px 0 0; z-index: -1; }
.nav-ico { flex: none; }
.back { margin-left: 30px; }
.fwd { margin-left: 44px; }
.reload { margin-left: 44px; }
.omnibox { margin-left: 38px; width: 1844px; height: 68px; border-radius: 34px; background: #e0e0e0; display: flex; align-items: center; padding: 0 32px 0 10px; flex: none; }
.info { width: 48px; height: 48px; border-radius: 50%; background: #fff; display: grid; place-items: center; margin-right: 16px; }
.url { font-size: 28px; margin-right: auto; }
.url span { color: #5e6063; }
.ob-ico { margin-left: 33px; }
.exts { display: flex; align-items: center; gap: 40px; margin-left: 36px; }
.bar { width: 4px; height: 32px; border-radius: 2px; background: #d1e8c1; flex: none; }
.toolbar .bar { margin: 0 18px 0 34px; }
.profile { width: 186px; height: 68px; border: 3px solid #d3d8e0; border-radius: 34px; background: #edf2fb; display: flex; align-items: center; padding-left: 17px; font-size: 26px; color: #2c5fce; flex: none; }
.profile b { width: 40px; height: 40px; border-radius: 50%; background: #e0742b; color: #fff; font-weight: 400; font-size: 22px; display: grid; place-items: center; margin-right: 12px; }
.update { margin-left: 10px; width: 246px; height: 68px; border-radius: 34px; background: #d1e8c1; display: flex; align-items: center; justify-content: space-between; padding: 0 28px 0 24px; font-size: 26px; flex: none; }

/* bookmarks */
.bookmarks { height: 70px; background: #fff; border-bottom: 2px solid #c8c8c8; display: grid; grid-template-columns: 38px 58px 32px 308px 308px 308px 194px 192px 308px 308px 308px 334px 54px 36px 238px; font-size: 24px; letter-spacing: -.13px; }
.bookmarks .apps { grid-column: 2; }
.bm { display: flex; align-items: center; height: 68px; padding-bottom: 1px; }
.tight { letter-spacing: -.38px; }
.bm span { width: 32px; margin-right: 12px; display: flex; justify-content: center; flex: none; }
.all span { margin-right: 16px; }

/* page header */
.site-header { height: 253px; background: #333; color: #fff; text-align: center; padding-top: 25px; }
.site-header h1 { font-size: 42.67px; line-height: 68px; color: #f03224; text-shadow: 3px 3px 5px rgba(0,0,0,.7); }
.site-header h2 { font-size: 32px; line-height: 51px; margin-top: 21px; }
.site-header nav { display: flex; justify-content: center; gap: 140px; margin-top: 21px; font-size: 25.6px; line-height: 41px; }

/* contact card */
.card { width: 1066px; height: 1341px; margin: 40px auto 0; background: #fff; border-radius: 10px; box-shadow: 0 5px 13px rgba(0,0,0,.15); padding: 52px 53px 0; text-align: center; font-size: 21.33px; line-height: 34px; }
.card h1 { font-size: 48px; line-height: 77px; margin-bottom: 28px; }
.card h3 { font-size: 32px; line-height: 51px; margin-bottom: 27px; }
.card p { padding: 0 10px; }
form { display: flex; flex-direction: column; gap: 27px; }
input, textarea { width: 100%; height: 67px; border: 1.500px solid #ccc; border-radius: 6px; padding: 0 20px; font: 21.33px "Liberation Sans", Arial, sans-serif; display: block; resize: none; background: #fff; }
textarea { height: 91px; padding-top: 19px; overflow: hidden; }
::placeholder { color: #757575; opacity: 1; }
.area { position: relative; height: 91px; }
.area svg { position: absolute; right: 2px; bottom: 2px; }
form button { height: 55px; border: 0; border-radius: 6px; background: #333; color: #fff; padding: 0 0 2px; font: 24px "Liberation Sans", Arial, sans-serif; }

/* map */
.map { position: relative; width: 960px; height: 400px; overflow: hidden; font-family: Roboto, sans-serif; color: #000; text-align: left; }
.map-canvas { display: block; }
.lb { paint-order: stroke; stroke: #fff; stroke-width: 9px; stroke-linejoin: round; font-family: Roboto, sans-serif; }
.street { fill: #3c4043; }
.hood { fill: #3d4248; font-weight: 500; }
.city { fill: #2b2e31; font-weight: 500; }
.park { fill: #3f9168; }
.poi { fill: #7e45d0; }
.brg { fill: #617a8a; }
.shop { fill: #3c78d8; }
.food { fill: #c9601f; }
.rt { text-anchor: middle; fill: #333; font-family: Roboto, sans-serif; font-weight: 500; }
.shield { fill: #fff; }
.goog { font-family: "Open Sans", sans-serif; font-weight: 600; paint-order: stroke; stroke: #fff; stroke-width: 6px; }
.place { position: absolute; left: 13px; top: 13px; width: 402px; height: 123px; background: #fff; border-radius: 3px; box-shadow: 0 1px 6px rgba(0,0,0,.3); padding: 14px 25px 0 16px; display: flex; justify-content: space-between; }
.place > div { display: flex; flex-direction: column; }
.place strong { font-size: 18.67px; line-height: 22px; font-weight: 500; }
.place span { font-size: 16px; line-height: 20px; color: #5b5b5b; margin-top: 8px; }
.place a { font-size: 16px; line-height: 20px; color: #3070d8; margin-top: 27px; }
.place .dir { align-items: center; padding-top: 4px; }
.place .dir a { margin-top: 6px; }
.sat { position: absolute; left: 13px; top: 330px; width: 55px; height: 55px; border: 2px solid #fff; border-radius: 3px; box-shadow: 0 1px 5px rgba(0,0,0,.4); overflow: hidden; }
.sat svg { display: block; }
.zoomctl { position: absolute; left: 893px; top: 260px; width: 54px; height: 108px; background: #fff; box-shadow: 0 1px 5px rgba(0,0,0,.3); display: flex; flex-direction: column; align-items: center; justify-content: space-between; padding: 15px 0 24px; }
.zoomctl b { width: 24px; height: 24px; background: linear-gradient(#666,#666) center/24px 6px no-repeat, linear-gradient(#666,#666) center/6px 24px no-repeat; }
.zoomctl i { width: 40px; height: 2px; background: #e6e6e6; }
.zoomctl .minus { height: 6px; background: #666; }
.attrib { position: absolute; right: 0; bottom: 0; height: 19px; width: 472px; background: rgba(245,245,245,.75); display: flex; justify-content: space-between; padding: 0 8px 0 7px; font-size: 13.33px; line-height: 19px; }
```
